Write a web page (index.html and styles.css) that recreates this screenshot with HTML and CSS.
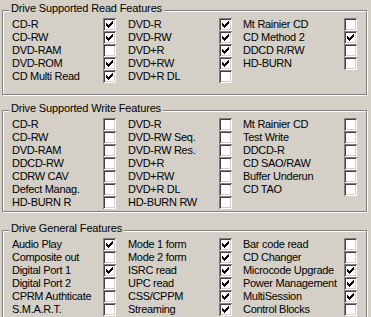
FILE: index.html
```html
<!DOCTYPE html>
<html lang="en">
  <head>
    <meta charset="UTF-8" />
    <title>Drive Features</title>
    <link rel="stylesheet" href="styles.css">
  </head>
  <body>
    <svg class="defs" width="0" height="0">
      <symbol id="tick" viewBox="0 0 13 13">
        <path d="M3 5V8H4V9H5V10H6V9H7V8H8V7H9V6H10V3H9V4H8V5H7V6H6V7H5V6H4V5Z" />
      </symbol>
    </svg>

    <section class="group">
      <div class="title">Drive Supported Read Features</div>
      <div class="rows">
        <span>CD-R</span><span class="cb"><svg><use href="#tick" /></svg></span>
        <span>DVD-R</span><span class="cb"><svg><use href="#tick" /></svg></span>
        <span>Mt Rainier CD</span><span class="cb"></span>

        <span>CD-RW</span><span class="cb"><svg><use href="#tick" /></svg></span>
        <span>DVD-RW</span><span class="cb"><svg><use href="#tick" /></svg></span>
        <span>CD Method 2</span><span class="cb"><svg><use href="#tick" /></svg></span>

        <span>DVD-RAM</span><span class="cb"></span>
        <span>DVD+R</span><span class="cb"><svg><use href="#tick" /></svg></span>
        <span>DDCD R/RW</span><span class="cb"></span>

        <span>DVD-ROM</span><span class="cb"><svg><use href="#tick" /></svg></span>
        <span>DVD+RW</span><span class="cb"><svg><use href="#tick" /></svg></span>
        <span>HD-BURN</span><span class="cb"></span>

        <span>CD Multi Read</span><span class="cb"><svg><use href="#tick" /></svg></span>
        <span>DVD+R DL</span><span class="cb"></span>
        <span></span><span></span>
      </div>
    </section>

    <section class="group tight">
      <div class="title">Drive Supported Write Features</div>
      <div class="rows">
        <span>CD-R</span><span class="cb"></span>
        <span>DVD-R</span><span class="cb"></span>
        <span>Mt Rainier CD</span><span class="cb"></span>

        <span>CD-RW</span><span class="cb"></span>
        <span>DVD-RW Seq.</span><span class="cb"></span>
        <span>Test Write</span><span class="cb"></span>

        <span>DVD-RAM</span><span class="cb"></span>
        <span>DVD-RW Res.</span><span class="cb"></span>
        <span>DDCD-R</span><span class="cb"></span>

        <span>DDCD-RW</span><span class="cb"></span>
        <span>DVD+R</span><span class="cb"></span>
        <span>CD SAO/RAW</span><span class="cb"></span>

        <span>CDRW CAV</span><span class="cb"></span>
        <span>DVD+RW</span><span class="cb"></span>
        <span>Buffer Underun</span><span class="cb"></span>

        <span>Defect Manag.</span><span class="cb"></span>
        <span>DVD+R DL</span><span class="cb"></span>
        <span>CD TAO</span><span class="cb"></span>

        <span>HD-BURN R</span><span class="cb"></span>
        <span>HD-BURN RW</span><span class="cb"></span>
        <span></span><span></span>
      </div>
    </section>

    <section class="group general">
      <div class="title">Drive General Features</div>
      <div class="rows">
        <span>Audio Play</span><span class="cb"><svg><use href="#tick" /></svg></span>
        <span>Mode 1 form</span><span class="cb"><svg><use href="#tick" /></svg></span>
        <span>Bar code read</span><span class="cb"></span>

        <span>Composite out</span><span class="cb"></span>
        <span>Mode 2 form</span><span class="cb"><svg><use href="#tick" /></svg></span>
        <span>CD Changer</span><span class="cb"></span>

        <span>Digital Port 1</span><span class="cb"><svg><use href="#tick" /></svg></span>
        <span>ISRC read</span><span class="cb"><svg><use href="#tick" /></svg></span>
        <span>Microcode Upgrade</span><span class="cb"><svg><use href="#tick" /></svg></span>

        <span>Digital Port 2</span><span class="cb"></span>
        <span>UPC read</span><span class="cb"><svg><use href="#tick" /></svg></span>
        <span>Power Management</span><span class="cb"><svg><use href="#tick" /></svg></span>

        <span>CPRM Authticate</span><span class="cb"></span>
        <span>CSS/CPPM</span><span class="cb"><svg><use href="#tick" /></svg></span>
        <span>MultiSession</span><span class="cb"><svg><use href="#tick" /></svg></span>

        <span>S.M.A.R.T.</span><span class="cb"></span>
        <span>Streaming</span><span class="cb"><svg><use href="#tick" /></svg></span>
        <span>Control Blocks</span><span class="cb"></span>
      </div>
    </section>
  </body>
</html>
```

FILE: styles.css
```css
*,
*::after,
*::before {
  box-sizing: border-box;
}

html,
body {
  margin: 0;
  height: 100%;
  overflow: hidden; /* la ventana corta el ultimo grupo */
}

body {
  background-color: #d4d0c8;
  color: #000;
  font-family: "Liberation Sans", Arial, sans-serif;
  font-size: 11px;
  padding: 10px 0 0 2px;
}

.defs {
  position: absolute;
}

/* marco grabado estilo Windows clasico */
.group {
  width: 365px;
  border: 1px solid #808080;
  box-shadow: inset 1px 1px #fff, 1px 1px #fff;
  padding: 0 0 11px 9px;
}

.group + .group {
  margin-top: 15px;
}

.group.tight {
  padding-bottom: 2px;
}

.group.general {
  margin-top: 18px;
}

.title {
  display: table;
  margin: -9px 0 0 -3px;
  padding: 0 2px;
  line-height: 13px;
  letter-spacing: -0.15px;
  background-color: #d4d0c8;
}

.rows {
  display: grid;
  grid-template-columns: 91px 25px 91px 24px 101px 13px;
  grid-auto-rows: 13px;
  margin-top: 3px;
  line-height: 13px;
  letter-spacing: -0.3px;
  white-space: nowrap;
}

.cb {
  width: 13px;
  height: 13px;
  background-color: #fff;
  box-shadow: inset 1px 1px #808080, inset -1px -1px #fff,
    inset 2px 2px #404040, inset -2px -2px #d4d0c8;
}

.cb svg {
  display: block;
  width: 13px;
  height: 13px;
  fill: #000;
  shape-rendering: crispEdges;
}
```
